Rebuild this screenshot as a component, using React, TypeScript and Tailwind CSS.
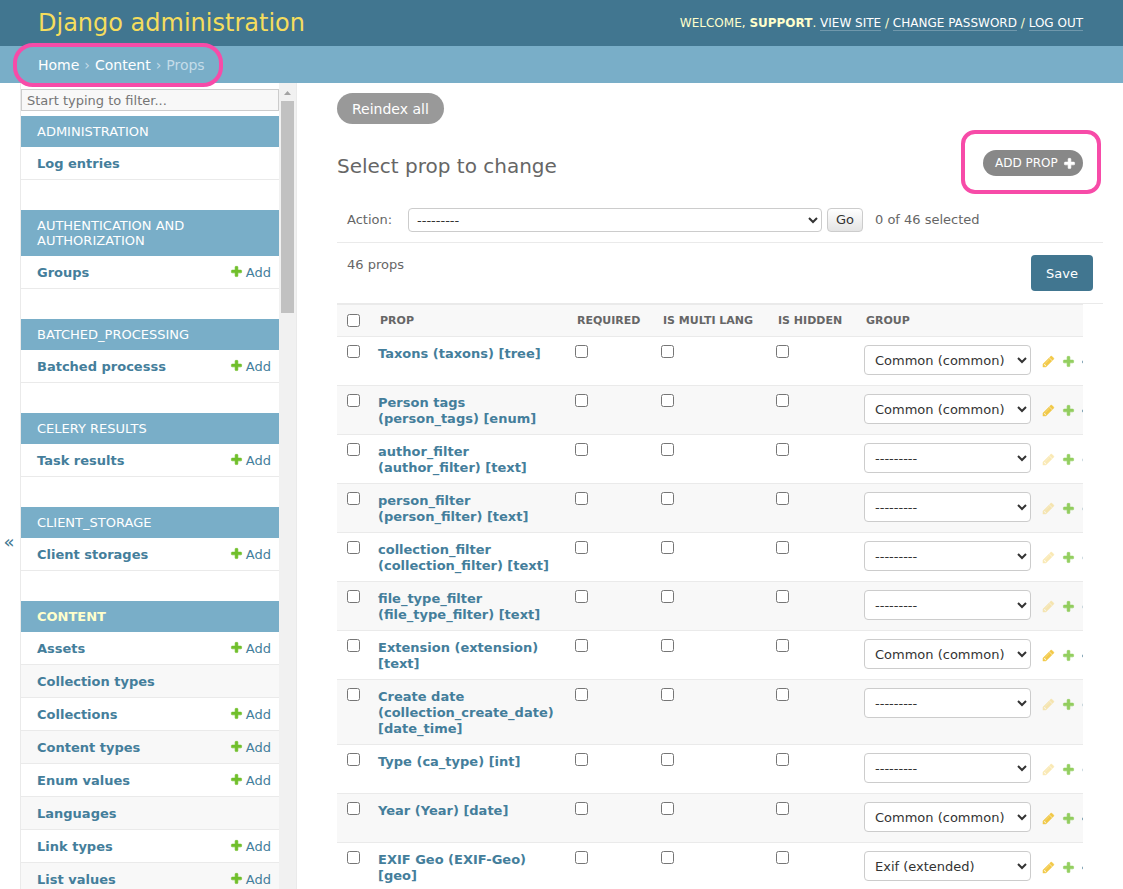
import { Fragment } from 'react'

interface Model { name: string; add?: boolean }
interface AppGroup { title: string; current?: boolean; models: Model[] }
interface Prop { name: string; group?: string }

const apps: AppGroup[] = [
  { title: 'Administration', models: [{ name: 'Log entries' }] },
  { title: 'Authentication and Authorization', models: [{ name: 'Groups', add: true }] },
  { title: 'Batched_Processing', models: [{ name: 'Batched processs', add: true }] },
  { title: 'Celery Results', models: [{ name: 'Task results', add: true }] },
  { title: 'Client_Storage', models: [{ name: 'Client storages', add: true }] },
  {
    title: 'Content',
    current: true,
    models: [
      { name: 'Assets', add: true },
      { name: 'Collection types' },
      { name: 'Collections', add: true },
      { name: 'Content types', add: true },
      { name: 'Enum values', add: true },
      { name: 'Languages' },
      { name: 'Link types', add: true },
      { name: 'List values', add: true },
    ],
  },
]

const props: Prop[] = [
  { name: 'Taxons (taxons) [tree]', group: 'Common (common)' },
  { name: 'Person tags (person_tags) [enum]', group: 'Common (common)' },
  { name: 'author_filter (author_filter) [text]' },
  { name: 'person_filter (person_filter) [text]' },
  { name: 'collection_filter (collection_filter) [text]' },
  { name: 'file_type_filter (file_type_filter) [text]' },
  { name: 'Extension (extension) [text]', group: 'Common (common)' },
  { name: 'Create date (collection_create_date) [date_time]' },
  { name: 'Type (ca_type) [int]' },
  { name: 'Year (Year) [date]', group: 'Common (common)' },
  { name: 'EXIF Geo (EXIF-Geo) [geo]', group: 'Exif (extended)' },
]

const flags = ['Required', 'Is multi lang', 'Is hidden']
const groups = ['---------', 'Common (common)', 'Exif (extended)']

function PlusIcon({ className }: { className: string }) {
  return (
    <svg viewBox="0 0 1792 1792" className={className} fill="currentColor" stroke="currentColor" strokeWidth="80" aria-hidden="true">
      <path d="M1600 796v192q0 40-28 68t-68 28h-416v416q0 40-28 68t-68 28h-192q-40 0-68-28t-28-68v-416h-416q-40 0-68-28t-28-68v-192q0-40 28-68t68-28h416v-416q0-40 28-68t68-28h192q40 0 68 28t28 68v416h416q40 0 68 28t28 68z" />
    </svg>
  )
}

function PencilIcon({ className }: { className: string }) {
  return (
    <svg viewBox="0 0 1792 1792" className={className} fill="currentColor" stroke="currentColor" strokeWidth="50" aria-hidden="true">
      <path d="M491 1536l91-91-235-235-91 91v107h128v128h107zm523-928q0-22-22-22-10 0-17 7l-542 542q-7 7-7 17 0 22 22 22 10 0 17-7l542-542q7-7 7-17zm-54-192l416 416-832 832h-416v-416zm683 96q0 53-37 90l-166 166-416-416 166-165q36-38 90-38 53 0 91 38l235 234q37 39 37 91z" />
    </svg>
  )
}

function EyeIcon({ className }: { className: string }) {
  return (
    <svg viewBox="0 0 1792 1792" className={className} fill="currentColor" aria-hidden="true">
      <path d="M1664 960q-152-236-381-353 61 104 61 225 0 185-131.5 316.5t-316.5 131.5-316.5-131.5-131.5-316.5q0-121 61-225-229 117-381 353 133 205 333.5 326.5t434.5 121.5 434.5-121.5 333.5-326.5zm-720-384q0-20-14-34t-34-14q-125 0-214.5 89.5t-89.5 214.5q0 20 14 34t34 14 34-14 14-34q0-86 61-147t147-61q20 0 34-14t14-34zm848 384q0 34-20 69-140 230-376.5 368.5t-499.5 138.5-499.5-139-376.5-368q-20-35-20-69t20-69q140-229 376.5-368t499.5-139 499.5 139 376.5 368q20 35 20 69z" />
    </svg>
  )
}

function Header() {
  const links = ['View site', 'Change password', 'Log out']
  return (
    <header>
      <div className="flex h-[46px] items-center justify-between bg-[#417690] pr-10 pl-[38px] text-[#ffffcc]">
        <h1 className="text-2xl leading-6 text-[#f5dd5d]">Django administration</h1>
        <div className="text-xs leading-4 uppercase">
          Welcome, <strong>Support</strong>.{' '}
          {links.map((link, i) => (
            <Fragment key={link}>
              {i > 0 && ' / '}
              <a href="#" className="border-b border-white/25 text-white">{link}</a>
            </Fragment>
          ))}
        </div>
      </div>
      <nav aria-label="Breadcrumbs" className="flex h-[37px] items-center bg-[#79aec8] pl-[38px] text-sm text-[#c4dce8]">
        <div className="relative flex gap-[5px]">
          <a href="#" className="text-white">Home</a>
          <span>›</span>
          <a href="#" className="text-white">Content</a>
          <span>›</span>
          <span>Props</span>
          <span className="absolute -inset-y-3 -right-[18px] -left-[25px] rounded-[20px] border-4 border-[#f74ba8]" />
        </div>
      </nav>
    </header>
  )
}

function Sidebar() {
  return (
    <aside className="flex w-[276px] shrink-0 overflow-hidden border-r border-[#eaeaea]">
      <div className="min-w-0 flex-1 pt-1.5">
        <input
          type="search"
          aria-label="Filter navigation items"
          placeholder="Start typing to filter..."
          className="mb-[5px] block h-[22px] w-full border border-[#cccccc] bg-[#f8f8f8] px-[5px] text-[13px] placeholder:text-[#757575]"
        />
        {apps.map(app => (
          <section key={app.title} className="mb-[30px]">
            <h2 className="bg-[#79aec8] px-4 py-2 text-[13px] leading-[15px] uppercase">
              <a href="#" className={app.current ? 'font-bold text-[#ffffcc]' : 'text-white'}>{app.title}</a>
            </h2>
            <ul>
              {app.models.map(m => (
                <li key={m.name} className="flex h-[33px] items-center justify-between border-b border-[#eaeaea] pt-0.5 pr-2 pl-4 text-[13px] text-[#447e9b] even:bg-[#f8f8f8]">
                  <a href="#" className="font-bold text-[#447e9b]">{m.name}</a>
                  {m.add && (
                    <a href="#" className="flex items-start gap-[3px]">
                      <PlusIcon className="mt-0.5 size-[13px] text-[#70bf2b]" />
                      Add
                    </a>
                  )}
                </li>
              ))}
            </ul>
          </section>
        ))}
      </div>
      <div className="flex w-[17px] shrink-0 flex-col items-center bg-[#f1f1f1] pt-2">
        <svg viewBox="0 0 7 4" className="mb-1.5 h-1 w-[7px]" fill="#a3a3a3" aria-hidden="true">
          <path d="M3.5 0L7 4H0z" />
        </svg>
        <div className="h-[212px] w-[13px] bg-[#c1c1c1]" />
      </div>
    </aside>
  )
}

function Actions() {
  return (
    <div className="-mr-5 text-[13px] text-[#666666]">
      <div className="flex h-[45px] items-center border-b border-[#eaeaea] pl-2.5">
        <label htmlFor="action" className="w-[61px]">Action:</label>
        <select id="action" className="h-6 min-w-0 max-w-[414px] flex-1 rounded-[4px] border border-[#cccccc] bg-white px-1 text-[#333333]">
          <option>---------</option>
        </select>
        <button type="submit" className="ml-[5px] h-6 w-9 rounded-[4px] border border-[#cccccc] bg-linear-to-b from-white to-[#e4e4e4] text-[#333333]">Go</button>
        <span className="ml-3">0 of 46 selected</span>
      </div>
      <div className="flex h-[61px] items-start justify-between border-b border-[#eaeaea] px-2.5 pt-3">
        <p className="leading-5">46 props</p>
        <button type="submit" className="h-9 w-[62px] rounded-[4px] bg-[#417690] pt-0.5 text-white">Save</button>
      </div>
    </div>
  )
}

function PropRow({ prop }: { prop: Prop }) {
  return (
    <tr className="h-[49px] border-b border-[#eaeaea] align-top even:bg-[#f8f8f8]">
      <td className="py-2 pl-2.5">
        <input type="checkbox" aria-label={`Select ${prop.name}`} className="block size-[13px]" />
      </td>
      <th scope="row" className="px-2 pt-[9px] pb-[7px] text-left leading-4">
        <a href="#" className="font-bold text-[#447e9b]">{prop.name}</a>
      </th>
      {flags.map(flag => (
        <td key={flag} className="p-2">
          <input type="checkbox" aria-label={`${flag}: ${prop.name}`} className="block size-[13px]" />
        </td>
      ))}
      <td className="p-2">
        <div className="flex items-center gap-[7px]">
          <select
            aria-label={`Group: ${prop.name}`}
            defaultValue={prop.group ?? '---------'}
            className="mr-1 h-[30px] w-[167px] shrink-0 rounded-[4px] border border-[#cccccc] bg-white px-1.5 text-[#333333]"
          >
            {groups.map(g => <option key={g}>{g}</option>)}
          </select>
          <a href="#" aria-label="Change" className="mt-[3px] shrink-0">
            <PencilIcon className={prop.group ? 'size-[13px] text-[#efb80b] opacity-75' : 'size-[13px] text-[#efb80b] opacity-30'} />
          </a>
          <a href="#" aria-label="Add" className="mt-[3px] shrink-0">
            <PlusIcon className="size-[13px] text-[#70bf2b] opacity-75" />
          </a>
          <a href="#" aria-label="View" className="mt-[3px] shrink-0">
            <EyeIcon className={prop.group ? 'size-[13px] text-[#417690] opacity-75' : 'size-[13px] text-[#417690] opacity-30'} />
          </a>
        </div>
      </td>
    </tr>
  )
}

function PropTable() {
  return (
    <div className="overflow-hidden">
      <table className="w-full table-fixed border-collapse text-[13px]">
        <colgroup>
          <col className="w-[33px]" />
          <col />
          <col className="w-[86px]" />
          <col className="w-[115px]" />
          <col className="w-[88px]" />
          <col className="w-[227px]" />
        </colgroup>
        <thead>
          <tr className="h-8 border-y border-[#eaeaea] bg-[#f8f8f8] text-left text-[11px] text-[#666666] uppercase">
            <th className="pl-2.5">
              <input type="checkbox" aria-label="Select all props" className="block size-[13px]" />
            </th>
            <th className="px-2.5 pt-0.5">Prop</th>
            {flags.map(flag => <th key={flag} className="px-2.5 pt-0.5 whitespace-nowrap">{flag}</th>)}
            <th className="px-2.5 pt-0.5">Group</th>
          </tr>
        </thead>
        <tbody>
          {props.map(p => <PropRow key={p.name} prop={p} />)}
        </tbody>
      </table>
    </div>
  )
}

export default function App() {
  return (
    <div className="flex h-screen flex-col overflow-hidden bg-white font-['DejaVu_Sans',Verdana,sans-serif] text-[#333333]">
      <Header />
      <div className="flex min-h-0 flex-1">
        <button type="button" aria-label="Toggle navigation" className="flex w-[21px] shrink-0 justify-center border-r border-[#eaeaea] pt-[447px] pr-0.5 text-lg leading-6 text-[#417690]">
          «
        </button>
        <Sidebar />
        <main className="min-w-0 flex-1 overflow-hidden px-10 pt-2.5">
          <button type="button" className="h-[31px] rounded-full bg-[#999999] px-[15px] text-sm text-white">Reindex all</button>
          <div className="flex h-[74px] items-start justify-between pt-[26px]">
            <h2 className="text-xl leading-8 text-[#666666]">Select prop to change</h2>
            <div className="relative">
              <a href="#" className="flex h-[26px] w-[100px] items-center justify-between rounded-full bg-[#888888] pr-[7px] pl-3 text-xs text-white uppercase">
                Add prop
                <PlusIcon className="size-[13px]" />
              </a>
              <span className="absolute -top-5 -right-[18px] -bottom-[18px] -left-[22px] rounded-[14px] border-4 border-[#f74ba8]" />
            </div>
          </div>
          <Actions />
          <PropTable />
        </main>
      </div>
    </div>
  )
}
